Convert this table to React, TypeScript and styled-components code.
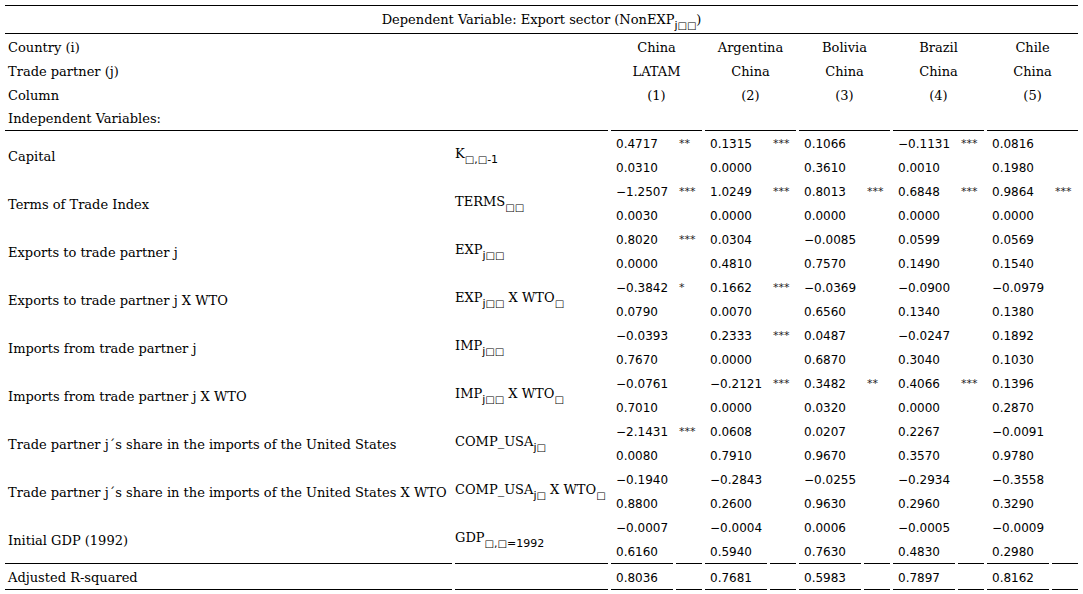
import React from "react";
import styled, { createGlobalStyle } from "styled-components";

const GlobalStyle = createGlobalStyle`
  html, body { margin: 0; padding: 0; background: #fff; }
`;

const Page = styled.div`
  padding: 5px 0 0 2px;
  background: #fff;
`;

const Table = styled.table`
  border-collapse: separate;
  border-spacing: 3px 0;
  table-layout: fixed;
  width: 1079px;
  font-family: "DejaVu Serif", serif;
  font-size: 13px;
  color: #000;
`;

const Cell = styled.td<{ $bottom?: boolean; $top?: boolean; $align?: string; $h?: number; $pt?: number }>`
  box-sizing: border-box;
  padding: ${(p) => p.$pt ?? 2}px 0 0 3px;
  height: ${(p) => p.$h ?? ((p.$bottom ? 25 : 24) + (p.$top ? 1 : 0))}px;
  vertical-align: middle;
  white-space: nowrap;
  text-align: ${(p) => p.$align ?? "left"};
  border-bottom: ${(p) => (p.$bottom ? "1px solid #000" : "none")};
  border-top: ${(p) => (p.$top ? "1px solid #000" : "none")};
  line-height: 16px;
`;

const ColHead = styled(Cell)`
  text-align: center;
  padding-left: 0;
`;

const SymCell = styled(Cell)`
  padding-left: 0;
`;

const Value = styled(Cell)`
  font-family: "DejaVu Sans", sans-serif;
  font-size: 12px;
  padding-left: 5px;
`;

const Stars = styled(Cell)`
  font-family: "DejaVu Sans", sans-serif;
  font-size: 11px;
  padding-left: 3px;
  color: #222;
`;

const Sub = styled.sub`
  font-family: "DejaVu Sans", sans-serif;
  font-size: 11px;
  vertical-align: -5px;
  line-height: 0;
`;

const Box = styled.span`
  font-size: 10px;
  vertical-align: 0;
`;

const Sym = styled.span`
  display: inline-block;
  padding-bottom: 6px;
`;

const colWidths = [447, 153, 62, 26, 62, 26, 62, 26, 62, 26, 62, 26];

const B = () => <Box>□</Box>;

type Row = {
  label: string;
  sym: React.ReactNode;
  coef: [string, string][];
  p: string[];
};

const rows: Row[] = [
  {
    label: "Capital",
    sym: <>K<Sub><B />,<B />-1</Sub></>,
    coef: [["0.4717", "**"], ["0.1315", "***"], ["0.1066", ""], ["−0.1131", "***"], ["0.0816", ""]],
    p: ["0.0310", "0.0000", "0.3610", "0.0010", "0.1980"],
  },
  {
    label: "Terms of Trade Index",
    sym: <>TERMS<Sub><B /><B /></Sub></>,
    coef: [["−1.2507", "***"], ["1.0249", "***"], ["0.8013", "***"], ["0.6848", "***"], ["0.9864", "***"]],
    p: ["0.0030", "0.0000", "0.0000", "0.0000", "0.0000"],
  },
  {
    label: "Exports to trade partner j",
    sym: <>EXP<Sub>j<B /><B /></Sub></>,
    coef: [["0.8020", "***"], ["0.0304", ""], ["−0.0085", ""], ["0.0599", ""], ["0.0569", ""]],
    p: ["0.0000", "0.4810", "0.7570", "0.1490", "0.1540"],
  },
  {
    label: "Exports to trade partner j X WTO",
    sym: <>EXP<Sub>j<B /><B /></Sub> X WTO<Sub><B /></Sub></>,
    coef: [["−0.3842", "*"], ["0.1662", "***"], ["−0.0369", ""], ["−0.0900", ""], ["−0.0979", ""]],
    p: ["0.0790", "0.0070", "0.6560", "0.1340", "0.1380"],
  },
  {
    label: "Imports from trade partner j",
    sym: <>IMP<Sub>j<B /><B /></Sub></>,
    coef: [["−0.0393", ""], ["0.2333", "***"], ["0.0487", ""], ["−0.0247", ""], ["0.1892", ""]],
    p: ["0.7670", "0.0000", "0.6870", "0.3040", "0.1030"],
  },
  {
    label: "Imports from trade partner j X WTO",
    sym: <>IMP<Sub>j<B /><B /></Sub> X WTO<Sub><B /></Sub></>,
    coef: [["−0.0761", ""], ["−0.2121", "***"], ["0.3482", "**"], ["0.4066", "***"], ["0.1396", ""]],
    p: ["0.7010", "0.0000", "0.0320", "0.0000", "0.2870"],
  },
  {
    label: "Trade partner j´s share in the imports of the United States",
    sym: <>COMP_USA<Sub>j<B /></Sub></>,
    coef: [["−2.1431", "***"], ["0.0608", ""], ["0.0207", ""], ["0.2267", ""], ["−0.0091", ""]],
    p: ["0.0080", "0.7910", "0.9670", "0.3570", "0.9780"],
  },
  {
    label: "Trade partner j´s share in the imports of the United States X WTO",
    sym: <>COMP_USA<Sub>j<B /></Sub> X WTO<Sub><B /></Sub></>,
    coef: [["−0.1940", ""], ["−0.2843", ""], ["−0.0255", ""], ["−0.2934", ""], ["−0.3558", ""]],
    p: ["0.8800", "0.2600", "0.9630", "0.2960", "0.3290"],
  },
  {
    label: "Initial GDP (1992)",
    sym: <>GDP<Sub><B />,<B />=1992</Sub></>,
    coef: [["−0.0007", ""], ["−0.0004", ""], ["0.0006", ""], ["−0.0005", ""], ["−0.0009", ""]],
    p: ["0.6160", "0.5940", "0.7630", "0.4830", "0.2980"],
  },
];

const heads = [
  ["China", "LATAM", "(1)"],
  ["Argentina", "China", "(2)"],
  ["Bolivia", "China", "(3)"],
  ["Brazil", "China", "(4)"],
  ["Chile", "China", "(5)"],
];

const headLabels = ["Country (i)", "Trade partner (j)", "Column"];

const adjR = ["0.8036", "0.7681", "0.5983", "0.7897", "0.8162"];

export default function App() {
  return (
    <Page>
      <GlobalStyle />
      <Table>
        <colgroup>
          {colWidths.map((w, i) => (
            <col key={i} style={{ width: w }} />
          ))}
        </colgroup>
        <tbody>
          <tr>
            <ColHead colSpan={12} $top $bottom $h={29} $pt={0}>
              Dependent Variable: Export sector (NonEXP<Sub>j<B /><B /></Sub>)
            </ColHead>
          </tr>
          {headLabels.map((hl, r) => (
            <tr key={hl}>
              <Cell colSpan={2} $pt={3}>{hl}</Cell>
              {heads.map((h, i) => (
                <ColHead key={i} colSpan={2} $pt={3}>
                  {h[r]}
                </ColHead>
              ))}
            </tr>
          ))}
          <tr>
            <Cell colSpan={2} $bottom>
              Independent Variables:
            </Cell>
            {heads.map((_, i) => (
              <Cell key={i} colSpan={2} $bottom />
            ))}
          </tr>
          {rows.map((row, ri) => {
            const last = ri === rows.length - 1;
            return (
              <React.Fragment key={row.label}>
                <tr>
                  <Cell rowSpan={2} $bottom={last} $pt={4}>
                    {row.label}
                  </Cell>
                  <SymCell rowSpan={2} $bottom={last} $pt={4}>
                    <Sym>{row.sym}</Sym>
                  </SymCell>
                  {row.coef.map(([v, s], i) => (
                    <React.Fragment key={i}>
                      <Value>{v}</Value>
                      <Stars>{s}</Stars>
                    </React.Fragment>
                  ))}
                </tr>
                <tr>
                  {row.p.map((v, i) => (
                    <React.Fragment key={i}>
                      <Value $bottom={last}>{v}</Value>
                      <Stars $bottom={last} />
                    </React.Fragment>
                  ))}
                </tr>
              </React.Fragment>
            );
          })}
          <tr>
            <Cell $bottom $h={26}>Adjusted R-squared</Cell>
            <Cell $bottom $h={26} />
            {adjR.map((v, i) => (
              <React.Fragment key={i}>
                <Value $bottom $h={26}>{v}</Value>
                <Stars $bottom $h={26} />
              </React.Fragment>
            ))}
          </tr>
        </tbody>
      </Table>
    </Page>
  );
}
